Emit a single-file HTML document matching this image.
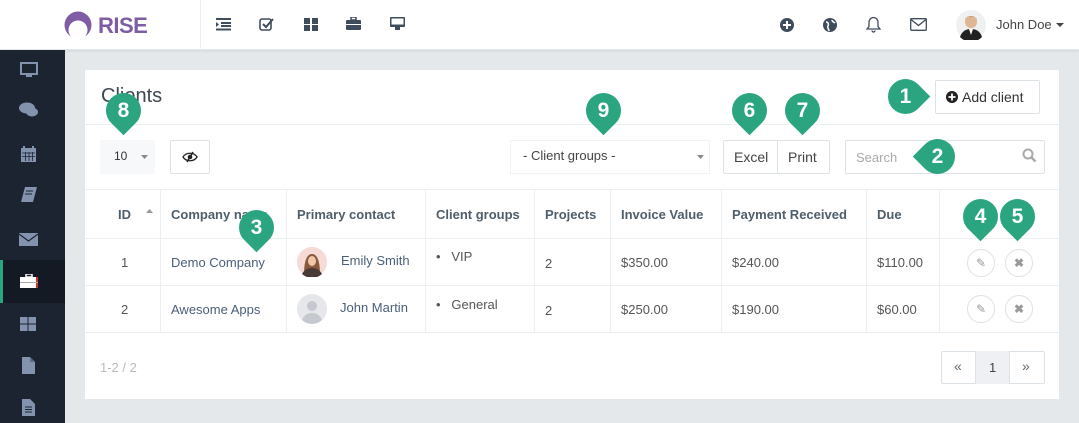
<!DOCTYPE html>
<html><head><meta charset="utf-8"><style>
*{margin:0;padding:0;box-sizing:border-box}
body{width:1079px;height:423px;overflow:hidden;background:#e4e8eb;font-family:"Liberation Sans",sans-serif;font-size:13px;color:#4e5e6a;position:relative}
.a{position:absolute}
.top{left:0;top:0;width:1079px;height:50px;background:#fff;border-bottom:1px solid #e2e6ea;box-shadow:0 1px 3px rgba(0,0,0,.08)}
.side{left:0;top:50px;width:65px;height:373px;background:#1c2431}
.card{left:85px;top:70px;width:974px;height:329px;background:#fff}
.hl{height:1px;background:#eceff1}
.vl{width:1px;background:#eceff1}
.th{font-weight:bold;color:#4e5e6a;top:207px}
.td{color:#555}
.lnk{color:#4a5f79}
.btn{border:1px solid #dde2e6;background:#fff;border-radius:2px}
.mk{width:35px;height:35px;background:#2aa57f;border-radius:50% 50% 50% 0}
.mn{width:35px;height:35px;color:#fff;font-weight:bold;font-size:21px;text-align:center;line-height:35px;font-family:"Liberation Sans Narrow","Liberation Sans",sans-serif}
.ci{width:28px;height:28px;border:1px solid #dde2e6;border-radius:50%;background:#fff;color:#999;text-align:center;line-height:26px;font-size:12px}
</style></head><body>
<div class="a top"></div>
<div class="a" style="left:200px;top:0;width:1px;height:50px;background:#eceff1"></div>
<!-- logo -->
<svg class="a" style="left:63px;top:11px" width="30" height="29" viewBox="0 0 30 29"><circle cx="15" cy="14" r="13.5" fill="#7f5ca3"/><circle cx="15" cy="19" r="9.5" fill="#fff"/><rect x="0" y="28" width="30" height="1" fill="#fff"/></svg>
<div class="a" style="left:98px;top:13px;font-size:22px;font-weight:bold;color:#7f5ca3;letter-spacing:-0.5px">RISE</div>
<!-- top icons -->
<svg class="a" style="left:216px;top:18px" width="15" height="13"><rect x="0" y="0" width="15" height="2" fill="#3e4c5c"/><rect x="5" y="4" width="10" height="2" fill="#3e4c5c"/><rect x="5" y="7" width="10" height="2" fill="#3e4c5c"/><rect x="0" y="10.5" width="15" height="2" fill="#3e4c5c"/><path d="M0 4l3 2.5L0 9z" fill="#3e4c5c"/></svg>
<svg class="a" style="left:259px;top:17px" width="15" height="14"><rect x="1" y="2" width="11" height="11" rx="2" fill="none" stroke="#3e4c5c" stroke-width="1.6"/><path d="M4 7l3 3 7-8" fill="none" stroke="#3e4c5c" stroke-width="2"/></svg>
<svg class="a" style="left:304px;top:18px" width="14" height="13"><rect x="0" y="0" width="6" height="6" fill="#3e4c5c"/><rect x="8" y="0" width="6" height="6" fill="#3e4c5c"/><rect x="0" y="7" width="6" height="6" fill="#3e4c5c"/><rect x="8" y="7" width="6" height="6" fill="#3e4c5c"/></svg>
<svg class="a" style="left:346px;top:17px" width="15" height="14"><rect x="5" y="0" width="5" height="3" fill="none" stroke="#3e4c5c" stroke-width="1.5"/><rect x="0" y="3" width="15" height="10" rx="1" fill="#3e4c5c"/><rect x="0" y="7" width="15" height="1" fill="#fff"/></svg>
<svg class="a" style="left:390px;top:17px" width="15" height="14"><rect x="0" y="0" width="15" height="10" rx="1" fill="#3e4c5c"/><rect x="1.5" y="1.5" width="12" height="6" fill="#fff"/><rect x="5" y="10" width="5" height="3" fill="#3e4c5c"/></svg>
<!-- right top icons -->
<svg class="a" style="left:780px;top:18px" width="14" height="14"><circle cx="7" cy="7" r="7" fill="#3e4c5c"/><path d="M7 3v8M3 7h8" stroke="#fff" stroke-width="2"/></svg>
<svg class="a" style="left:823px;top:18px" width="14" height="14"><circle cx="7" cy="7" r="7" fill="#3e4c5c"/><path d="M3 4c2 0 3 2 2 4s1 3 1 5M9 2c0 2 2 2 3 3" stroke="#fff" stroke-width="1.5" fill="none"/></svg>
<svg class="a" style="left:866px;top:16px" width="15" height="17"><path d="M7.5 1.5c-3 0-4.5 2.5-4.5 5v4l-2 2.5h13l-2-2.5v-4c0-2.5-1.5-5-4.5-5z" fill="none" stroke="#3e4c5c" stroke-width="1.3"/><path d="M6 14.5a1.5 1.5 0 003 0" stroke="#3e4c5c" stroke-width="1.3" fill="none"/></svg>
<svg class="a" style="left:910px;top:18px" width="17" height="13"><rect x=".7" y=".7" width="15.6" height="11.6" rx="1" fill="none" stroke="#3e4c5c" stroke-width="1.3"/><path d="M1 1.5l7.5 6 7.5-6" fill="none" stroke="#3e4c5c" stroke-width="1.3"/></svg>
<svg class="a" style="left:956px;top:10px" width="30" height="30"><circle cx="15" cy="15" r="15" fill="#eef0f2"/><circle cx="15" cy="12" r="6" fill="#e0b592"/><path d="M9 10c0-5 12-5 12 0l-1-2c-2-2-8-2-10 0z" fill="#a0582e"/><path d="M4 27c2-6 6-8 11-8s9 2 11 8a15 15 0 01-22 0z" fill="#222"/><path d="M13 19l2 6 2-6z" fill="#fff"/></svg>
<div class="a" style="left:996px;top:17px;font-size:13px;color:#444">John Doe</div>
<svg class="a" style="left:1056px;top:23px" width="8" height="5"><path d="M0 0h8L4 4z" fill="#444"/></svg>
<!-- sidebar -->
<div class="a side"></div>
<div class="a" style="left:0;top:260px;width:65px;height:43px;background:#131a24"></div>
<div class="a" style="left:0;top:260px;width:3px;height:43px;background:#2aa57f"></div>
<svg class="a" style="left:20px;top:62px" width="18" height="16"><rect x="1" y="1" width="16" height="11" fill="none" stroke="#8393ad" stroke-width="2"/><rect x="6" y="12" width="6" height="3" fill="#8393ad"/></svg>
<svg class="a" style="left:19px;top:102px" width="20" height="16"><ellipse cx="8" cy="6" rx="8" ry="5.5" fill="#8393ad"/><ellipse cx="13" cy="10" rx="6" ry="4.5" fill="#8393ad"/></svg>
<svg class="a" style="left:21px;top:146px" width="15" height="16"><rect x="0" y="2" width="15" height="14" fill="#8393ad"/><path d="M1 7h13M1 10.5h13M4.5 6v9M8 6v9M11.5 6v9" stroke="#1c2431" stroke-width=".8"/><rect x="2" y="0" width="2" height="4" fill="#8393ad"/><rect x="11" y="0" width="2" height="4" fill="#8393ad"/></svg>
<svg class="a" style="left:20px;top:187px" width="17" height="17"><path d="M5 0h12l-4 15H1z" fill="#8393ad"/><path d="M6 4h7M5 7h7" stroke="#1c2431" stroke-width="1"/></svg>
<svg class="a" style="left:19px;top:233px" width="19" height="13"><path d="M0 0h19v13H0z" fill="#8393ad"/><path d="M0 1l9.5 7L19 1" stroke="#1c2431" stroke-width="1.2" fill="none"/></svg>
<svg class="a" style="left:20px;top:274px" width="18" height="15"><rect x="6" y="0" width="6" height="3" fill="none" stroke="#fff" stroke-width="1.5"/><rect x="0" y="3" width="18" height="11" fill="#fff"/><rect x="16" y="3" width="2" height="11" fill="#c33"/><rect x="0" y="8" width="18" height="1" fill="#aaa"/></svg>
<svg class="a" style="left:20px;top:317px" width="16" height="14"><rect x="0" y="0" width="7.5" height="6.5" fill="#8393ad"/><rect x="8.5" y="0" width="7.5" height="6.5" fill="#8393ad"/><rect x="0" y="7.5" width="7.5" height="6.5" fill="#8393ad"/><rect x="8.5" y="7.5" width="7.5" height="6.5" fill="#8393ad"/></svg>
<svg class="a" style="left:22px;top:357px" width="13" height="17"><path d="M0 0h8l5 5v12H0z" fill="#8393ad"/><path d="M8 0v5h5" fill="#5d6c85"/></svg>
<svg class="a" style="left:22px;top:399px" width="13" height="17"><path d="M0 0h8l5 5v12H0z" fill="#8393ad"/><path d="M3 8h7M3 10.5h7M3 13h7" stroke="#1c2431" stroke-width="1"/></svg>
<!-- card -->
<div class="a card"></div>
<div class="a" style="left:101px;top:85px;font-size:20px;color:#3d4852">Clients</div>
<div class="a btn" style="left:935px;top:80px;width:105px;height:34px"></div>
<svg class="a" style="left:946px;top:91px" width="12" height="12"><circle cx="6" cy="6" r="6" fill="#222"/><path d="M6 2.5v7M2.5 6h7" stroke="#fff" stroke-width="1.8"/></svg>
<div class="a" style="left:962px;top:89px;font-size:14px;color:#333">Add client</div>
<div class="a hl" style="left:85px;top:124px;width:974px"></div>
<!-- toolbar -->
<div class="a" style="left:100px;top:140px;width:55px;height:34px;background:#f7f8f9"></div>
<div class="a" style="left:114px;top:149px;font-size:12px;color:#333">10</div>
<svg class="a" style="left:141px;top:155px" width="7" height="5"><path d="M0 0h7L3.5 4z" fill="#888"/></svg>
<div class="a btn" style="left:170px;top:140px;width:40px;height:34px"></div>
<svg class="a" style="left:182px;top:151px" width="16" height="12"><path d="M1 6c3-5 11-5 14 0-3 5-11 5-14 0z" fill="none" stroke="#222" stroke-width="1.3"/><circle cx="8" cy="6" r="2.3" fill="#222"/><path d="M11 1L5 11" stroke="#222" stroke-width="1.5"/></svg>
<div class="a" style="left:510px;top:140px;width:200px;height:34px;border:1px solid #f0f2f4"></div>
<div class="a" style="left:523px;top:148px;font-size:13px;color:#444">- Client groups -</div>
<svg class="a" style="left:697px;top:155px" width="7" height="5"><path d="M0 0h7L3.5 4z" fill="#888"/></svg>
<div class="a btn" style="left:723px;top:140px;width:107px;height:34px"></div>
<div class="a" style="left:777px;top:140px;width:1px;height:34px;background:#dde2e6"></div>
<div class="a" style="left:734px;top:149px;font-size:14px;color:#444">Excel</div>
<div class="a" style="left:788px;top:149px;font-size:14px;color:#444">Print</div>
<div class="a btn" style="left:845px;top:140px;width:200px;height:34px"></div>
<div class="a" style="left:856px;top:150px;font-size:13px;color:#aaa">Search</div>
<svg class="a" style="left:1022px;top:148px" width="15" height="15"><circle cx="6" cy="6" r="4.5" fill="none" stroke="#aaa" stroke-width="2"/><path d="M9.5 9.5l4 4" stroke="#aaa" stroke-width="2.5"/></svg>
<!-- table -->
<div class="a hl" style="left:85px;top:189px;width:974px"></div>
<div class="a hl" style="left:85px;top:238px;width:974px"></div>
<div class="a hl" style="left:85px;top:285px;width:974px"></div>
<div class="a hl" style="left:85px;top:332px;width:974px"></div>
<div class="a vl" style="left:160px;top:190px;height:142px"></div>
<div class="a vl" style="left:286px;top:190px;height:142px"></div>
<div class="a vl" style="left:425px;top:190px;height:142px"></div>
<div class="a vl" style="left:534px;top:190px;height:142px"></div>
<div class="a vl" style="left:610px;top:190px;height:142px"></div>
<div class="a vl" style="left:721px;top:190px;height:142px"></div>
<div class="a vl" style="left:866px;top:190px;height:142px"></div>
<div class="a vl" style="left:939px;top:190px;height:142px"></div>
<div class="a th" style="left:118px">ID</div>
<svg class="a" style="left:146px;top:209px" width="7" height="4"><path d="M0 4h7L3.5 0z" fill="#999"/></svg>
<div class="a th" style="left:171px">Company name</div>
<div class="a th" style="left:297px">Primary contact</div>
<div class="a th" style="left:436px">Client groups</div>
<div class="a th" style="left:545px">Projects</div>
<div class="a th" style="left:621px">Invoice Value</div>
<div class="a th" style="left:732px">Payment Received</div>
<div class="a th" style="left:877px">Due</div>
<!-- row1 -->
<div class="a td" style="left:121px;top:255px">1</div>
<div class="a lnk" style="left:171px;top:255px">Demo Company</div>
<svg class="a" style="left:297px;top:247px" width="30" height="30"><circle cx="15" cy="15" r="15" fill="#f6dad6"/><path d="M7 28c0-12 2-21 8-21s8 9 8 21z" fill="#8a5a3c"/><ellipse cx="15" cy="14" rx="4" ry="5" fill="#f0c8a8"/><path d="M5 27c3-5 6-6 10-6s7 1 10 6a15 15 0 01-20 0z" fill="#4a3a36"/></svg>
<div class="a lnk" style="left:341px;top:253px">Emily Smith</div>
<div class="a td" style="left:436px;top:249px">•&nbsp;&nbsp;&nbsp;VIP</div>
<div class="a td" style="left:545px;top:256px">2</div>
<div class="a td" style="left:621px;top:255px">$350.00</div>
<div class="a td" style="left:732px;top:255px">$240.00</div>
<div class="a td" style="left:877px;top:255px">$110.00</div>
<div class="a ci" style="left:967px;top:249px">✎</div>
<div class="a ci" style="left:1005px;top:249px;font-weight:bold">✖</div>
<!-- row2 -->
<div class="a td" style="left:121px;top:302px">2</div>
<div class="a lnk" style="left:171px;top:302px">Awesome Apps</div>
<svg class="a" style="left:297px;top:294px" width="30" height="30"><circle cx="15" cy="15" r="15" fill="#e5e7ea"/><circle cx="15" cy="12" r="5" fill="#c5c9cf"/><path d="M5 26c2-5 6-7 10-7s8 2 10 7a15 15 0 01-20 0z" fill="#c5c9cf"/></svg>
<div class="a lnk" style="left:340px;top:300px">John Martin</div>
<div class="a td" style="left:436px;top:297px">•&nbsp;&nbsp;&nbsp;General</div>
<div class="a td" style="left:545px;top:303px">2</div>
<div class="a td" style="left:621px;top:302px">$250.00</div>
<div class="a td" style="left:732px;top:302px">$190.00</div>
<div class="a td" style="left:877px;top:302px">$60.00</div>
<div class="a ci" style="left:967px;top:295px">✎</div>
<div class="a ci" style="left:1005px;top:295px;font-weight:bold">✖</div>
<!-- footer -->
<div class="a" style="left:100px;top:360px;color:#bbb">1-2 / 2</div>
<div class="a btn" style="left:941px;top:351px;width:104px;height:33px"></div>
<div class="a" style="left:975px;top:351px;width:35px;height:33px;background:#eef0f3;border-left:1px solid #dde2e6;border-right:1px solid #dde2e6"></div>
<div class="a" style="left:954px;top:358px;color:#666;font-size:14px">«</div>
<div class="a" style="left:989px;top:360px;color:#444">1</div>
<div class="a" style="left:1022px;top:358px;color:#666;font-size:14px">»</div>
<!-- markers -->
<div class="a mk" style="left:106px;top:93px;transform:rotate(-45deg)"></div><div class="a mn" style="left:106px;top:93px">8</div>
<div class="a mk" style="left:586px;top:93px;transform:rotate(-45deg)"></div><div class="a mn" style="left:586px;top:93px">9</div>
<div class="a mk" style="left:732px;top:93px;transform:rotate(-45deg)"></div><div class="a mn" style="left:732px;top:93px">6</div>
<div class="a mk" style="left:785px;top:93px;transform:rotate(-45deg)"></div><div class="a mn" style="left:785px;top:93px">7</div>
<div class="a mk" style="left:239px;top:210px;transform:rotate(-45deg)"></div><div class="a mn" style="left:239px;top:210px">3</div>
<div class="a mk" style="left:963px;top:199px;transform:rotate(-45deg)"></div><div class="a mn" style="left:963px;top:199px">4</div>
<div class="a mk" style="left:1000px;top:199px;transform:rotate(-45deg)"></div><div class="a mn" style="left:1000px;top:199px">5</div>
<div class="a mk" style="left:888px;top:79px;transform:rotate(-135deg)"></div><div class="a mn" style="left:888px;top:79px">1</div>
<div class="a mk" style="left:920px;top:139px;transform:rotate(45deg)"></div><div class="a mn" style="left:920px;top:139px">2</div>
</body></html>
